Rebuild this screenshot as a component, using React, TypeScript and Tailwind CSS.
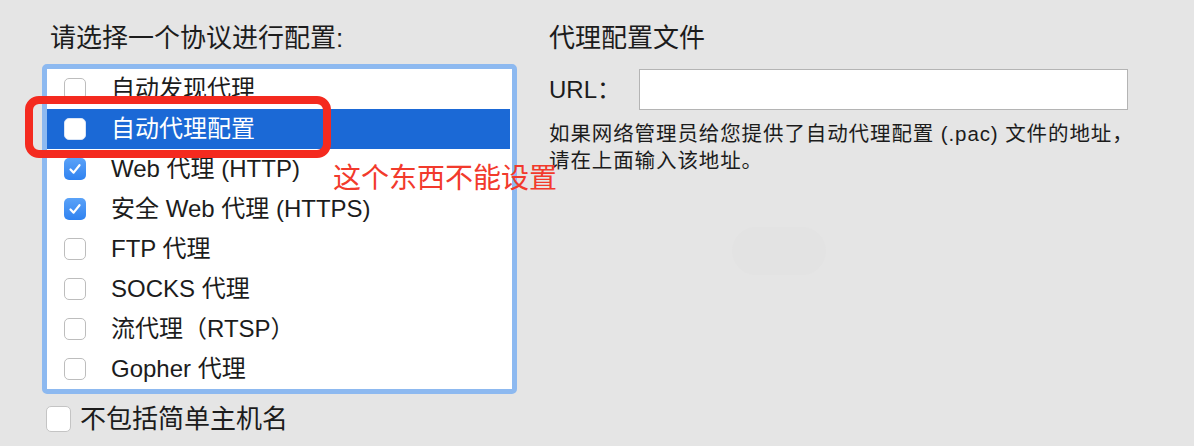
import React from "react";

type Row = { label: string; checked: boolean; selected?: boolean };

const rows: Row[] = [
  { label: "自动发现代理", checked: false },
  { label: "自动代理配置", checked: false, selected: true },
  { label: "Web 代理 (HTTP)", checked: true },
  { label: "安全 Web 代理 (HTTPS)", checked: true },
  { label: "FTP 代理", checked: false },
  { label: "SOCKS 代理", checked: false },
  { label: "流代理（RTSP）", checked: false },
  { label: "Gopher 代理", checked: false },
];

function Check({ checked, selected }: { checked: boolean; selected?: boolean }) {
  if (checked) {
    return (
      <div className="w-[22px] h-[22px] rounded-[5px] bg-gradient-to-b from-[#5aa2f8] to-[#2f82f0] flex items-center justify-center shrink-0">
        <svg width="16" height="16" viewBox="0 0 16 16" fill="none">
          <path d="M3.5 8.5 L6.6 11.6 L12.5 4.2" stroke="white" strokeWidth="2.2" strokeLinecap="round" strokeLinejoin="round" />
        </svg>
      </div>
    );
  }
  return (
    <div
      className={
        selected
          ? "w-[22px] h-[22px] rounded-[5px] bg-white border border-[#d8e4f6] shrink-0"
          : "w-[22px] h-[22px] rounded-[5px] bg-white border border-[#bdbdbd] shrink-0"
      }
    />
  );
}

export default function App() {
  return (
    <div className="relative w-[1194px] h-[446px] overflow-hidden bg-[#e5e5e5] text-[#1c1c1c] font-['Liberation_Sans','Noto_Sans_CJK_SC',sans-serif]">
      <div className="flex">
        {/* Left column */}
        <div className="w-[549px] shrink-0 pl-[42px] pt-[22px]">
          <div className="pl-[8px] h-[42px] text-[26px] leading-[32px]">请选择一个协议进行配置:</div>
          <div className="w-[475px] border-[5px] border-[#8db9f0] rounded-[5px] bg-white">
            <div className="flex flex-col">
              {rows.map((r) => (
                <div
                  key={r.label}
                  className={
                    r.selected
                      ? "h-[40px] flex items-center pl-[17px] bg-[#1b69d6] text-white mr-[2px]"
                      : "h-[40px] flex items-center pl-[17px]"
                  }
                >
                  <Check checked={r.checked} selected={r.selected} />
                  <span className="ml-[25px] text-[24px] leading-[30px]">{r.label}</span>
                </div>
              ))}
            </div>
          </div>
          <div className="mt-[12px] ml-[4px] flex items-center h-[26px]">
            <div className="w-[25px] h-[26px] rounded-[5px] bg-white border border-[#c4c4c4] shrink-0" />
            <span className="ml-[9px] text-[26px] leading-[32px]">不包括简单主机名</span>
          </div>
        </div>

        {/* Right column */}
        <div className="pt-[22px] flex flex-col">
          <div className="text-[26px] leading-[32px] h-[32px]">代理配置文件</div>
          <div className="mt-[15px] flex items-center">
            <span className="w-[90px] text-[24px] leading-[30px]">URL：</span>
            <div className="w-[489px] h-[41px] bg-white border border-[#b4b4b4]" />
          </div>
          <div className="mt-[10px] text-[20.5px] leading-[27px] tracking-[0.9px]">
            <div>如果网络管理员给您提供了自动代理配置 (.pac) 文件的地址，</div>
            <div>请在上面输入该地址。</div>
          </div>
          <div className="mt-[53px] ml-[183px] w-[94px] h-[48px] rounded-full bg-[#e3e3e3]" />
        </div>
      </div>

      {/* Annotation overlays */}
      <div className="absolute left-[25px] top-[96px] w-[306px] h-[62px] border-[8px] border-[#f42a1f] rounded-[14px]" />
      <div className="absolute left-[333px] top-[163px] text-[28px] leading-[32px] text-[#f23a2c]">这个东西不能设置</div>
    </div>
  );
}
